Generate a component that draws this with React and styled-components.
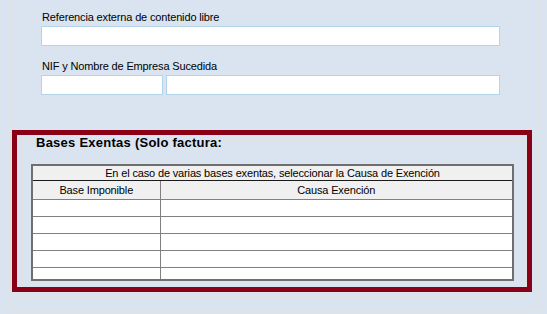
import React from "react";
import styled, { createGlobalStyle } from "styled-components";

const GlobalStyle = createGlobalStyle`
  html, body {
    margin: 0;
    padding: 0;
    background: #d9e4f0;
    font-family: "Liberation Sans", Arial, sans-serif;
  }
`;

const Page = styled.div`
  width: 547px;
  height: 314px;
  overflow: hidden;
  padding-left: 10px;
  box-sizing: border-box;
`;

const Panel = styled.div`
  width: 529px;
  box-sizing: border-box;
  border: 1px solid #e1e1e1;
  border-top: none;
  padding: 11px 0 13px;
`;

const Field = styled.div`
  padding-left: 30px;
  margin-bottom: ${props => props.gap || 0}px;
`;

const Label = styled.div`
  font-size: 11px;
  line-height: 13px;
  letter-spacing: -0.15px;
  color: #000;
  padding-left: 1px;
  margin-bottom: 2px;
`;

const InputRow = styled.div`
  display: flex;
  gap: 3px;
`;

const Input = styled.input`
  width: ${props => props.w}px;
  height: 20px;
  box-sizing: border-box;
  border: 1px solid #b3d5ec;
  background: #fff;
  margin: 0;
  padding: 0 3px;
  outline: none;
`;

const Group = styled.div`
  position: relative;
  margin: 0 11px;
  height: 157px;
  box-sizing: border-box;
  padding: 0 13px 0 8px;
  border: 1px solid #e2e2e2;
`;

const Title = styled.div`
  width: fit-content;
  margin: -6px 0 0 4px;
  padding: 0 1px;
  background: #d9e4f0;
  font-size: 13px;
  font-weight: bold;
  line-height: 15px;
  letter-spacing: 0.25px;
  color: #000;
`;

const Highlight = styled.div`
  position: absolute;
  left: -11px;
  top: -11px;
  width: 520px;
  height: 162px;
  box-sizing: border-box;
  border: 5px solid #8a0016;
  pointer-events: none;
`;

const Grid = styled.table`
  margin-top: 14px;
  width: 483px;
  border-collapse: collapse;
  border: 2px solid #6f6f6f;
  table-layout: fixed;
  font-size: 11px;
  letter-spacing: -0.15px;
`;

const HeadCell = styled.th`
  font-weight: normal;
  background: #f0f0f0;
  border: 1px solid #808080;
  border-bottom: 1px solid ${props => (props.dark ? "#1a1a1a" : "#808080")};
  height: ${props => props.h}px;
  padding: 0;
  text-align: center;
  line-height: 13px;
`;

const Cell = styled.td`
  background: #fff;
  border: 1px solid #808080;
  height: ${props => (props.last ? 11 : 16)}px;
  padding: 0;
`;

const rows = [0, 1, 2, 3, 4];

export default function App() {
  return (
    <Page>
      <GlobalStyle />
      <Panel>
        <Field gap={14}>
          <Label>Referencia externa de contenido libre</Label>
          <Input w={459} />
        </Field>
        <Field gap={45}>
          <Label>NIF y Nombre de Empresa Sucedida</Label>
          <InputRow>
            <Input w={122} />
            <Input w={334} />
          </InputRow>
        </Field>
        <Group>
          <Title>Bases Exentas (Solo factura:</Title>
          <Grid>
            <colgroup>
              <col style={{ width: 128 }} />
              <col />
            </colgroup>
            <thead>
              <tr>
                <HeadCell colSpan={2} h={14} dark>
                  En el caso de varias bases exentas, seleccionar la Causa de Exención
                </HeadCell>
              </tr>
              <tr>
                <HeadCell h={18}>Base Imponible</HeadCell>
                <HeadCell h={18}>Causa Exención</HeadCell>
              </tr>
            </thead>
            <tbody>
              {rows.map(r => (
                <tr key={r}>
                  <Cell last={r === rows.length - 1} />
                  <Cell last={r === rows.length - 1} />
                </tr>
              ))}
            </tbody>
          </Grid>
          <Highlight />
        </Group>
      </Panel>
    </Page>
  );
}
